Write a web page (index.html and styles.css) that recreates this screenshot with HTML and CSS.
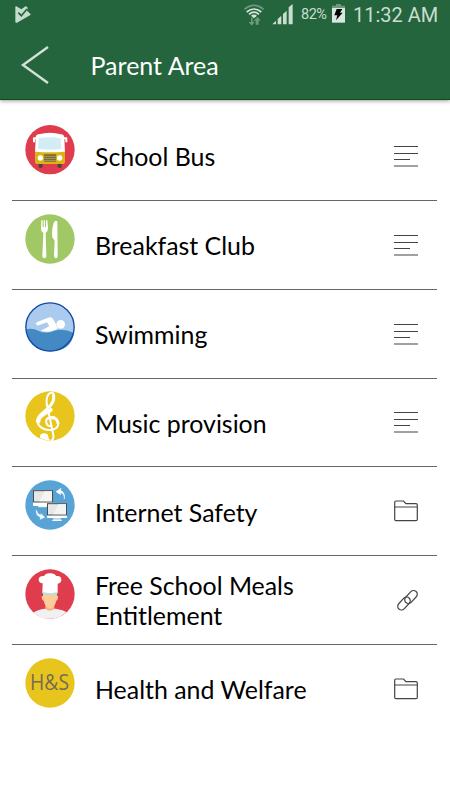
FILE: index.html
```html
<!DOCTYPE html>
<html lang="en">
<head>
    <meta charset="UTF-8">
    <meta name="viewport" content="width=device-width, initial-scale=1.0">
    <title>Parent Area</title>
    <link rel="stylesheet" href="styles.css">
</head>
<body>
    <header class="header">
        <div class="status-bar">
            <svg class="play" width="16" height="17" viewBox="0 0 48 51">
                <path fill="#c5dccd" d="M1 3Q1 0 4 1L19 10L32 1Q37 2 38 6L36 14L46 23Q48 26 45 28L6 50Q1 51 1 47Z"/>
                <path d="M10 20L19 29L36 9" fill="none" stroke="#24653d" stroke-width="5"/>
            </svg>
            <div class="status-right">
                <svg class="wifi" width="22" height="22" viewBox="0 0 66 66">
                    <g fill="none" stroke-width="5">
                        <path d="M4 16Q33 -8 62 16" stroke="#6c9a7d"/>
                        <path d="M11 24Q33 6 55 24" stroke="#d5e6da"/>
                        <path d="M18 31Q33 18 48 31" stroke="#d5e6da"/>
                    </g>
                    <path d="M24 35Q33 28 42 35L33 43Z" fill="#d5e6da"/>
                    <path d="M24 41h5v13h6L26 65L17 54h7ZM43 62h-5V50h-6L44 39L53 50h-6v12Z" fill="#6c9a7d"/>
                </svg>
                <svg class="signal" width="21" height="21" viewBox="0 0 63 63">
                    <path fill="#c9ddd0" d="M1 61L12 50V61ZM17 45L28 35V61H17ZM33 30L44 20V61H33ZM50 10L62 0V61H50Z"/>
                </svg>
                <span class="percent">82%</span>
                <svg class="battery" width="13" height="19" viewBox="0 0 39 57">
                    <path d="M12 0H27V5H39V15H0V5H12Z" fill="#6c9a7d"/>
                    <path d="M0 12H39V56H0Z" fill="#d9e8de"/>
                    <path d="M14 15H31L24 26H32L12 49L16 34H7Z" fill="#000"/>
                </svg>
                <span class="time">11:32 AM</span>
            </div>
        </div>
        <div class="title-bar">
            <svg class="back" width="30" height="40" viewBox="0 0 30 40">
                <path d="M28 2L3 20L28 38" fill="none" stroke="#d3e2d8" stroke-width="2.400"/>
            </svg>
            <h1>Parent Area</h1>
        </div>
    </header>

    <!-- Icons shared by several rows -->
    <svg class="symbols" width="0" height="0">
        <symbol id="lines" viewBox="0 0 24 22">
            <path d="M0 1.500H24M0 8.500H24M0 14.500H16M0 21H24" fill="none" stroke="#444" stroke-width="1.200"/>
        </symbol>
        <symbol id="folder" viewBox="0 0 24 22">
            <path d="M.7 20V2.200Q.7 1 2 1H9.500L12 3.700H22Q23.300 3.700 23.300 5V19.500Q23.300 20.700 22 20.700H2Q.7 20.700 .7 19.500M.7 7H23.300" fill="none" stroke="#444" stroke-width="1.200"/>
        </symbol>
    </svg>

    <ul class="menu">
        <li>
            <svg class="icon" viewBox="0 0 150 150">
                <circle cx="75" cy="74" r="74" fill="#df3c4d"/>
                <path d="M41 115h12v11q-6 6-12 0ZM98 115h12v11q-6 6-12 0Z" fill="#4b4346"/>
                <path d="M32 38Q32 29 41 28Q75 19 108 28Q118 29 118 38L120 84H30Z" fill="#fff"/>
                <path d="M33 40H27V52M117 40H124V52" fill="none" stroke="#fff" stroke-width="6" stroke-linejoin="round"/>
                <path d="M41 40Q75 33 107 40L109 71Q75 77 39 71Z" fill="#d3edf4"/>
                <path d="M30 80Q75 84 120 80V111Q120 117 114 117H36Q30 117 30 111Z" fill="#dab414"/>
                <rect x="57" y="88" width="36" height="22" fill="#716334"/>
                <path d="M57 94H93M57 100H93M57 106H93" stroke="#d2bb63" stroke-width="2"/>
                <circle cx="46" cy="99" r="8" fill="#fff"/>
                <circle cx="104" cy="99" r="8" fill="#fff"/>
            </svg>
            <span class="label">School Bus</span>
            <svg class="type"><use href="#lines"/></svg>
        </li>
        <li>
            <svg class="icon" viewBox="0 0 150 150">
                <circle cx="75" cy="75" r="74" fill="#a0c864"/>
                <path d="M49 19h4v20h3V19h4v20h3V19h4l2 24q0 10-7 14l2 70q-1 6-6 6t-6-6l3-70q-8-4-7-14Z" fill="#fff"/>
                <path d="M97 22Q90 17 86 27Q79 48 82 70L89 80L87 126Q88 133 93 133T98 126Z" fill="#fff"/>
            </svg>
            <span class="label">Breakfast Club</span>
            <svg class="type"><use href="#lines"/></svg>
        </li>
        <li>
            <svg class="icon" viewBox="0 0 150 150">
                <circle cx="75" cy="75" r="73" fill="#aacbed"/>
                <path d="M3 82Q23 77 40 86Q62 97 88 86Q117 78 147 93Q138 148 75 148Q11 146 3 82Z" fill="#438ac4"/>
                <path d="M33 66Q32 62 37 60L69 47Q77 44 82 49Q90 58 98 80L88 85Q70 93 47 86L73 73L66 61L41 70Q35 71 33 66Z" fill="#fff"/>
                <circle cx="107" cy="67" r="13" fill="#fff"/>
                <circle cx="75" cy="75" r="72.500" fill="none" stroke="#1549a5" stroke-width="4"/>
            </svg>
            <span class="label">Swimming</span>
            <svg class="type"><use href="#lines"/></svg>
        </li>
        <li>
            <svg class="icon" viewBox="0 0 150 150">
                <circle cx="75" cy="75" r="74" fill="#e8c51d"/>
                <g fill="none" stroke="#fff" stroke-linecap="round">
                    <path d="M77 106C60 103 59 82 75 79C96 73 109 103 91 113C66 125 39 109 37 91C35 65 83 51 86 25C87 12 86 3 79 5C62 9 63 35 68 52L85 132Q87 145 80 148" stroke-width="6"/>
                    <path d="M77 57C54 70 39 77 40 92" stroke-width="12"/>
                    <path d="M86 13Q88 32 74 46M73 82Q95 76 99 96" stroke-width="9"/>
                </g>
                <path d="M45 137Q45 127 57 127T70 137Q69 142 76 148Q60 149 46 142Z" fill="#fff"/>
            </svg>
            <span class="label">Music provision</span>
            <svg class="type"><use href="#lines"/></svg>
        </li>
        <li>
            <svg class="icon" viewBox="0 0 150 150">
                <circle cx="75" cy="75" r="74" fill="#58a4d7"/>
                <path d="M44 72H64L67 81H40Z" fill="#c7d6df"/>
                <rect x="24" y="31" width="60" height="47" rx="2" fill="#fff"/>
                <rect x="25.500" y="32" width="57" height="34" fill="#e6e8e8" stroke="#4c4a4b" stroke-width="3"/>
                <path d="M59 34H81V64H43Z" fill="#f4f4f4"/>
                <path d="M86 113H106L110 122H82Z" fill="#c7d6df"/>
                <rect x="66" y="69" width="60" height="45" rx="2" fill="#fff"/>
                <rect x="67.500" y="71" width="57" height="34" fill="#e6e8e8" stroke="#4c4a4b" stroke-width="3"/>
                <path d="M101 73H123V103H85Z" fill="#f4f4f4"/>
                <path d="M82 121H110M40 80H65" stroke="#fff" stroke-width="3"/>
                <path d="M118 57Q119 39 105 38L107 44L93 35L108 25L106 31Q121 37 118 57ZM34 90Q32 107 47 112L45 118L59 112L48 101L47 106Q37 103 34 90Z" fill="#fff" stroke="#fff" stroke-width="1.500"/>
            </svg>
            <span class="label">Internet Safety</span>
            <svg class="type"><use href="#folder"/></svg>
        </li>
        <li>
            <svg class="icon" viewBox="0 0 150 150">
                <circle cx="75" cy="75" r="74" fill="#df3c4d"/>
                <path d="M26 131Q34 123 58 119H91Q116 123 124 130Q105 149 75 149T26 131Z" fill="#f3f0f1"/>
                <path d="M61 109H88V120Q75 131 61 120Z" fill="#efb77f"/>
                <path d="M50 70H99L97 81H53Z" fill="#654641"/>
                <path d="M54 74H96V80Q100 79 99 86Q98 94 94 95Q89 116 75 119Q61 116 56 95Q51 94 50 86Q50 79 54 80Z" fill="#fccd99"/>
                <path d="M53 43Q40 42 41 30Q44 19 57 21Q62 11 75 13Q88 11 94 21Q109 19 109 33Q108 43 98 44L98 71Q75 78 52 71Z" fill="#fff"/>
                <path d="M52 69Q75 76 98 69V74Q75 81 52 74Z" fill="#b9dde5"/>
            </svg>
            <span class="label">Free School Meals Entitlement</span>
            <svg class="type" viewBox="0 0 24 22">
                <g fill="none" stroke="#444" stroke-width="1.200">
                    <rect x="-7.500" y="-3.700" width="15" height="7.400" rx="3.700" transform="translate(10 14.500) rotate(-47)"/>
                    <rect x="-7.500" y="-3.700" width="15" height="7.400" rx="3.700" transform="translate(17 8) rotate(-47)"/>
                </g>
            </svg>
        </li>
        <li>
            <svg class="icon" viewBox="0 0 150 150">
                <circle cx="75" cy="75" r="74" fill="#e8c51d"/>
                <text class="hs" x="15" y="95" textLength="117" lengthAdjust="spacingAndGlyphs">H&amp;S</text>
            </svg>
            <span class="label">Health and Welfare</span>
            <svg class="type"><use href="#folder"/></svg>
        </li>
    </ul>
</body>
</html>
```
FILE: styles.css
```css
body {
    margin: 0;
    background-color: #fff;
    font-family: Lato, "Liberation Sans", sans-serif;
    color: #000;
}
.header {
    height: 100px;
    box-sizing: border-box;
    background-color: #24653d;
    border-bottom: 1px solid #074f17;
    box-shadow: 0 1px 4px rgba(0, 0, 0, 0.4);
}
.status-bar {
    display: flex;
    justify-content: space-between;
    height: 30px;
    padding: 0 13px 0 15px;
    color: #c9ddd0;
    font-family: Roboto, sans-serif;
}
.play {
    margin-top: 6px;
}
.status-right {
    display: flex;
}
.wifi {
    margin-top: 4px;
}
.signal {
    margin: 4px 0 0 7px;
}
.percent {
    width: 27px;
    margin: 0 4px 0 8px;
    font-size: 14.500px;
    line-height: 30px;
    letter-spacing: -0.5px;
}
.battery {
    margin-top: 4px;
}
.time {
    width: 84px;
    margin-left: 8px;
    font-size: 20px;
    line-height: 30px;
    white-space: nowrap;
}
.title-bar {
    display: flex;
    align-items: center;
    height: 69px;
    padding-left: 20px;
}
.title-bar h1 {
    margin: 0 0 0 40.500px;
    font-size: 25px;
    font-weight: 400;
    line-height: 30px;
}
.header h1 {
    color: #fff;
}
.symbols {
    position: absolute;
}
.menu {
    list-style: none;
    margin: 12.200px 13px 0 12px;
    padding: 0;
}
.menu li {
    display: flex;
    align-items: center;
    height: 88.800px;
    box-sizing: border-box;
    padding: 0 19.500px 0 13px;
    border-bottom: 1px solid #666;
}
.menu li:last-child {
    border-bottom-color: transparent;
}
.icon {
    flex: none;
    align-self: flex-start;
    width: 50px;
    height: 50px;
    margin-top: 12.600px;
}
.label {
    width: 240px;
    margin: 0.5px auto 0 20px;
    font-size: 24.900px;
    line-height: 30px;
}
.type {
    flex: none;
    width: 24px;
    height: 22px;
}
.hs {
    font-family: "Open Sans", sans-serif;
    font-size: 64px;
    fill: #776b55;
}
```
